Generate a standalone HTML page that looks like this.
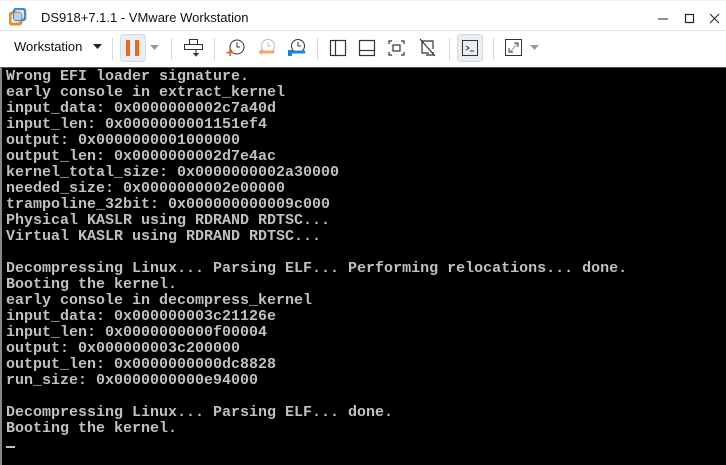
<!DOCTYPE html>
<html><head><meta charset="utf-8"><style>
*{margin:0;padding:0;box-sizing:border-box}
body{width:726px;height:465px;overflow:hidden;background:#fff;position:relative;font-family:"Liberation Sans",sans-serif}
.title{position:absolute;left:0;top:0;width:726px;height:31px;border-top:1px solid #f0f0f0;border-bottom:1px solid #e6e6e6}
.ttxt{position:absolute;left:41px;top:9px;font-size:13px;color:#111}
.tb{position:absolute;left:0;top:31px;width:726px;height:36px;background:#fff}
.con{position:absolute;left:0;top:67px;width:726px;height:398px;background:#000;border-left:2px solid #888;border-top:1px solid #555}
pre{position:absolute;left:4px;top:1px;font-family:"Liberation Mono",monospace;font-size:15px;line-height:16px;color:#c0c0c0;font-weight:bold;letter-spacing:0}
.sep{position:absolute;top:38px;width:1px;height:22px;background:#d8d8d8}
svg{position:absolute}
</style></head><body>
<div class="title">
<svg style="left:9px;top:7px" width="18" height="18" viewBox="0 0 18 18"><rect x="1" y="5" width="11" height="11" rx="2" fill="none" stroke="#f08a24" stroke-width="3"/><rect x="5" y="1" width="11" height="11" rx="2" fill="none" stroke="#3a8ed6" stroke-width="2.5"/><rect x="5" y="5" width="7" height="7" fill="#aed4f2"/></svg>
<div class="ttxt">DS918+7.1.1 - VMware Workstation</div>
<svg style="left:657px;top:12px" width="64" height="12"><line x1="1" y1="6" x2="11" y2="6" stroke="#222"/><rect x="28.5" y="1.5" width="8" height="8" fill="none" stroke="#222" stroke-width="1.2"/><path d="M53 1 L62 10 M62 1 L53 10" stroke="#222"/></svg>
</div>
<div class="tb">
<div style="position:absolute;left:14px;top:8px;font-size:13px;color:#111">Workstation</div>
<svg style="left:93px;top:13px" width="10" height="6"><path d="M0 0H9L4.5 5Z" fill="#222"/></svg>
</div>
<div class="sep" style="left:112px"></div>
<div style="position:absolute;left:120px;top:34px;width:26px;height:28px;background:#e9eef4;border:1px solid #d4dbe4;border-radius:3px"></div>
<svg style="left:126px;top:40px" width="14" height="16"><rect x="0" y="0" width="4" height="16" fill="#f0661a"/><rect x="9" y="0" width="4" height="16" fill="#f0661a"/></svg>
<svg style="left:150px;top:45px" width="10" height="6"><path d="M0 0H9L4.5 5Z" fill="#999"/></svg>
<div class="sep" style="left:171px"></div>
<svg style="left:184px;top:38px" width="20" height="20" viewBox="0 0 20 20" fill="none" stroke="#333"><rect x="5.5" y="1.5" width="8" height="5"/><rect x="0.5" y="6.5" width="18" height="5"/><path d="M12 12V17M9.5 15l2.5 3 2.5-3" fill="#333"/></svg>
<div class="sep" style="left:214px"></div>
<svg style="left:226px;top:38px" width="20" height="20" viewBox="0 0 20 20" fill="none"><circle cx="11" cy="9" r="7" stroke="#333"/><path d="M11 4.5V9H14" stroke="#333"/><path d="M4 11V18M0.5 14.5H7.5" stroke="#f05a1a" stroke-width="1.5"/></svg>
<svg style="left:257px;top:38px" width="20" height="20" viewBox="0 0 20 20" fill="none"><circle cx="11" cy="8" r="6.5" stroke="#bbb"/><path d="M11 4V8H14" stroke="#bbb"/><path d="M4 14H17" stroke="#f6a56a" stroke-width="3"/><path d="M1 14L5 11V17Z" fill="#f6a56a"/></svg>
<svg style="left:287px;top:38px" width="20" height="20" viewBox="0 0 20 20" fill="none"><circle cx="11" cy="8" r="6.5" stroke="#333"/><path d="M11 4V8H14" stroke="#333"/><path d="M1 14H18" stroke="#1b86d8" stroke-width="3"/><rect x="1" y="12" width="4" height="6" fill="#1b86d8"/></svg>
<div class="sep" style="left:317px"></div>
<svg style="left:329px;top:38px" width="120" height="20" viewBox="0 0 120 20" fill="none" stroke="#333" stroke-width="1.2"><rect x="1.5" y="2.5" width="15" height="15"/><path d="M6.5 2.5V17.5"/><rect x="30.5" y="2.5" width="15" height="15"/><path d="M30.5 12.5H45.5"/><path d="M60 6V3H63M72 3H75V6M75 14V17H72M63 17H60V14"/><rect x="64" y="7" width="7" height="6"/><path d="M93 3H104V11M93 3V15H100M91 1L106 18M104 14V17H97"/></svg>
<div class="sep" style="left:449px"></div>
<div style="position:absolute;left:457px;top:34px;width:26px;height:28px;background:#e9eef4;border:1px solid #d4dbe4;border-radius:3px"></div>
<svg style="left:461px;top:39px" width="18" height="18" viewBox="0 0 18 18" fill="none" stroke="#333"><rect x="1.5" y="1.5" width="15" height="15"/><path d="M5 7L8 9L5 11M9 12H13"/></svg>
<div class="sep" style="left:493px"></div>
<svg style="left:504px;top:38px" width="20" height="20" viewBox="0 0 20 20" fill="none" stroke="#333"><rect x="1.5" y="1.5" width="16" height="16"/><path d="M6 14L13 6" stroke="#999"/><path d="M10 5H14V9M5 10V14H9"/></svg>
<svg style="left:530px;top:45px" width="10" height="6"><path d="M0 0H9L4.5 5Z" fill="#999"/></svg>
<div class="con"><pre>Wrong EFI loader signature.
early console in extract_kernel
input_data: 0x0000000002c7a40d
input_len: 0x0000000001151ef4
output: 0x0000000001000000
output_len: 0x0000000002d7e4ac
kernel_total_size: 0x0000000002a30000
needed_size: 0x0000000002e00000
trampoline_32bit: 0x000000000009c000
Physical KASLR using RDRAND RDTSC...
Virtual KASLR using RDRAND RDTSC...

Decompressing Linux... Parsing ELF... Performing relocations... done.
Booting the kernel.
early console in decompress_kernel
input_data: 0x000000003c21126e
input_len: 0x0000000000f00004
output: 0x000000003c200000
output_len: 0x0000000000dc8828
run_size: 0x0000000000e94000

Decompressing Linux... Parsing ELF... done.
Booting the kernel.</pre></div>
<div style="position:absolute;left:6px;top:446px;width:9px;height:2px;background:#c0c0c0"></div>
</body></html>
